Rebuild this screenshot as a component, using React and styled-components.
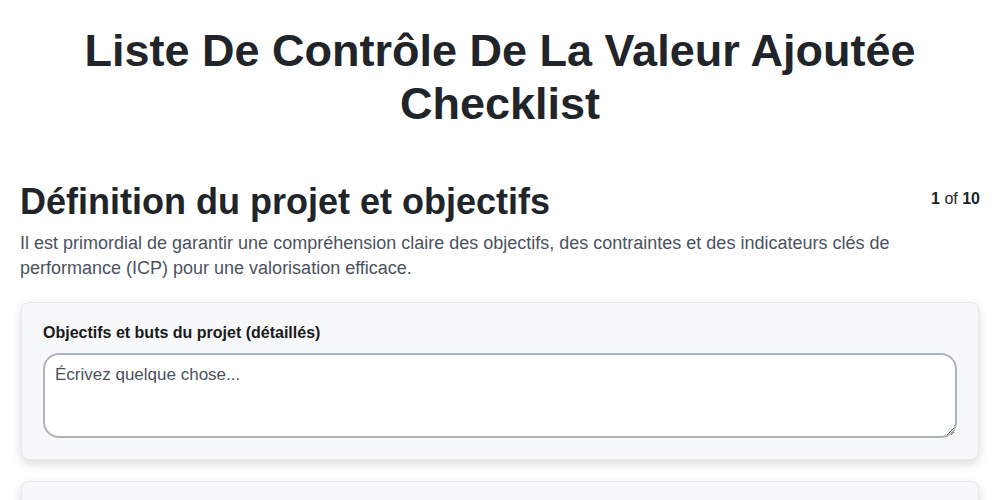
import styled, { createGlobalStyle } from "styled-components";

const GlobalStyle = createGlobalStyle`
  * {
    box-sizing: border-box;
  }
  body {
    margin: 0;
    background: #ffffff;
    font-family: "Liberation Sans", Arial, sans-serif;
    color: #212529;
  }
`;

const Page = styled.div`
  padding: 24px 20px 0;
`;

const Title = styled.h1`
  margin: 0 0 50px;
  text-align: center;
  font-size: 45px;
  line-height: 53px;
  font-weight: 700;
  color: #212529;
`;

const SectionHead = styled.div`
  display: flex;
  justify-content: space-between;
  align-items: flex-start;
`;

const SectionTitle = styled.h2`
  margin: 0;
  font-size: 36px;
  line-height: 44px;
  font-weight: 700;
  color: #212529;
`;

const Counter = styled.div`
  padding-top: 10px;
  font-size: 16px;
  color: #212529;
  b {
    font-weight: 700;
  }
`;

const Intro = styled.p`
  margin: 7px 0 21px;
  font-size: 18px;
  line-height: 25px;
  color: #4a5260;
`;

const Card = styled.div`
  margin: 0 1px 21px;
  padding: 20px 21px 21px;
  background: #f7f8fa;
  border: 1px solid #e6e8ec;
  border-radius: 8px;
  box-shadow: 0 4px 10px rgba(0, 0, 0, 0.14);
`;

const Label = styled.label`
  display: block;
  margin-bottom: 10px;
  font-size: 16px;
  line-height: 20px;
  font-weight: 700;
  color: #1a1a1a;
`;

const TextArea = styled.textarea`
  display: block;
  width: 100%;
  height: 85px;
  padding: 10px;
  border: 2px solid #adb4bb;
  border-radius: 16px;
  background: #ffffff;
  font-family: "Liberation Sans", Arial, sans-serif;
  font-size: 17px;
  line-height: 20px;
  color: #212529;
  resize: vertical;
  outline: none;
  &::placeholder {
    color: #4a5260;
    opacity: 1;
  }
`;

const fields = [
  "Objectifs et buts du projet (détaillés)",
  "Contraintes et limites du projet",
];

export default function App() {
  return (
    <>
      <GlobalStyle />
      <Page>
        <Title>
          Liste De Contrôle De La Valeur Ajoutée
          <br />
          Checklist
        </Title>
        <SectionHead>
          <SectionTitle>Définition du projet et objectifs</SectionTitle>
          <Counter>
            <b>1</b> of <b>10</b>
          </Counter>
        </SectionHead>
        <Intro>
          Il est primordial de garantir une compréhension claire des objectifs,
          des contraintes et des indicateurs clés de performance (ICP) pour une
          valorisation efficace.
        </Intro>
        {fields.map((f) => (
          <Card key={f}>
            <Label>{f}</Label>
            <TextArea placeholder="Écrivez quelque chose..." />
          </Card>
        ))}
      </Page>
    </>
  );
}
